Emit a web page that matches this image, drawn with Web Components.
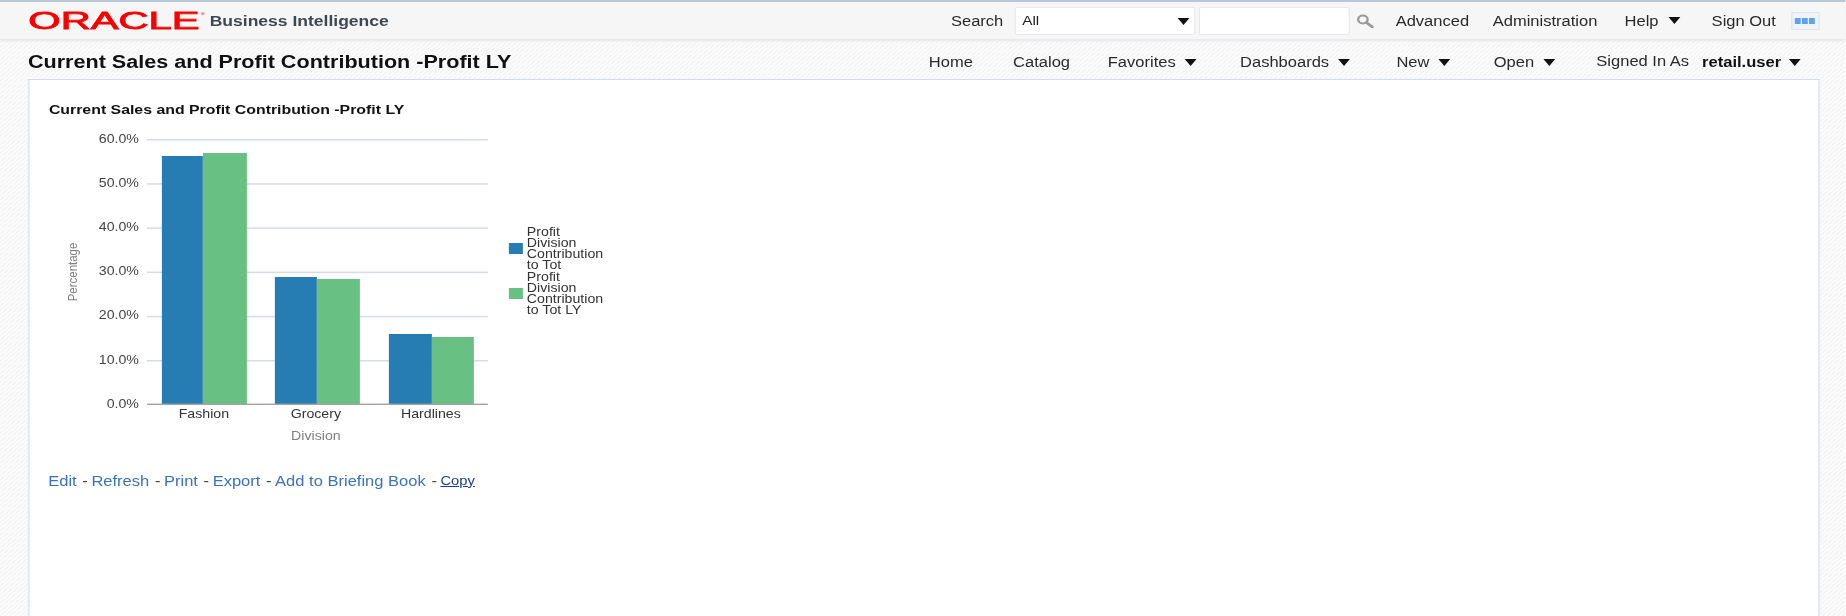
<!DOCTYPE html>
<html lang="en"><head><meta charset="utf-8"><title>Oracle Business Intelligence</title>
<style>
html,body{margin:0;padding:0;height:616px;overflow:hidden;background:#fff}
body{font-family:"Liberation Sans",Arial,sans-serif;font-size:14px;color:#2b2b2b}
</style></head><body>
<obi-app>
  <obi-global-header></obi-global-header>
  <obi-title-bar heading="Current Sales and Profit Contribution -Profit LY"></obi-title-bar>
  <obi-card>
    <span slot="title">Current Sales and Profit Contribution -Profit LY</span>
    <obi-chart></obi-chart>
    <obi-links></obi-links>
  </obi-card>
</obi-app>
<script>
const S=1.18;
function def(name,html,extra){
  customElements.define(name,class extends HTMLElement{
    constructor(){super();this.attachShadow({mode:'open'}).innerHTML=html;}
    connectedCallback(){extra&&extra.call(this);}
  });
}
def('obi-app',`<style>
:host{display:flex;flex-direction:column;width:1564.4px;height:616px;transform:scaleX(${S});transform-origin:0 0;overflow:hidden;filter:blur(.35px);
background:repeating-linear-gradient(135deg,#f3f3f3 0 1px,#fbfbfb 1px 3px)}
</style><slot></slot>`);
def('obi-arrow',`<style>:host{display:inline-block;width:0;height:0;border-left:5px solid transparent;border-right:5px solid transparent;border-top:7px solid #111;margin-left:8px;vertical-align:1px}</style>`);
def('obi-item',`<style>:host{display:inline-flex;align-items:center;white-space:nowrap;font-size:14px;line-height:16px;color:#2a2a2a}</style><slot></slot>`);
def('obi-logo',`<style>:host{display:block;width:150px;height:26px}svg{display:block;overflow:visible}</style>
<svg width="150" height="26" viewBox="0 0 150 26" role="img" aria-label="Oracle">
<text x="0" y="21" font-family="Liberation Sans,Arial,sans-serif" font-size="23" fill="#f80000" stroke="#f80000" stroke-width=".8" textLength="145" lengthAdjust="spacingAndGlyphs">ORACLE</text>
<circle cx="147.8" cy="5.6" r="1.6" fill="#f29a9a"/>
</svg>`);
def('obi-select',`<style>:host{display:flex;align-items:center;justify-content:space-between;box-sizing:border-box;width:152.5px;height:28px;background:#fff;border:1px solid #e6e9ef;border-radius:2px;padding:0 4px 0 5px;font-size:13px;color:#222}
i{display:block;border-left:5px solid transparent;border-right:5px solid transparent;border-top:7px solid #111;margin-top:2px}</style><span><slot></slot></span><i></i>`);
def('obi-input',`<style>:host{display:block;box-sizing:border-box;width:128px;height:28px;background:#fff;border:1px solid #e6e9ef;border-radius:2px}</style>`);
def('obi-search-icon',`<style>:host{display:block;width:16px;height:14px}svg{display:block}</style>
<svg width="16" height="14" viewBox="0 0 16 14"><circle cx="6" cy="5.5" r="4" fill="none" stroke="#9a9a9a" stroke-width="2"/><path d="M9 8.5l5 4.5" stroke="#9a9a9a" stroke-width="2.6" stroke-linecap="round"/></svg>`);
def('obi-apps-icon',`<style>:host{display:flex;align-items:center;justify-content:center;gap:1.6px;box-sizing:border-box;width:24px;height:18px;background:#f0f3f7;border:1px solid #dfe4ea}
b{display:block;width:4.6px;height:6px;background:#5ea3ee}</style><b></b><b></b><b></b>`);
def('obi-global-header',`<style>
:host{display:flex;align-items:center;box-sizing:border-box;height:40px;flex:none;padding:0 22.9px 0 23.7px;background:#f6f6f6;border-top:2px solid #b9c7da;border-bottom:1px solid #e9e9e9;box-shadow:0 1px 2px #e6e6e6;color:#333}
.bi{margin:1px 0 0 4px;font-weight:bold;font-size:14.85px;color:#3f4750}
.right{margin-left:auto;display:flex;align-items:center}
</style>
<obi-logo></obi-logo><span class="bi">Business Intelligence</span>
<div class="right">
<obi-item>Search</obi-item><obi-select style="margin-left:10px">All</obi-select><obi-input style="margin-left:3.5px"></obi-input>
<obi-search-icon style="margin-left:5px"></obi-search-icon>
<obi-item style="margin-left:17.5px">Advanced</obi-item>
<obi-item style="margin-left:20px">Administration</obi-item>
<obi-item style="margin-left:23px">Help<obi-arrow></obi-arrow></obi-item>
<obi-item style="margin-left:27px">Sign Out</obi-item>
<obi-apps-icon style="margin-left:12.5px"></obi-apps-icon>
</div>`);
def('obi-title-bar',`<style>
:host{display:flex;align-items:center;box-sizing:border-box;height:39px;flex:none;padding:5px 38px 0 23.7px}
h1{margin:0;font-size:18.3px;line-height:20px;font-weight:bold;color:#111}
.right{margin-left:auto;display:flex;align-items:center}
</style>
<h1></h1>
<div class="right">
<obi-item>Home</obi-item>
<obi-item style="margin-left:34px">Catalog</obi-item>
<obi-item style="margin-left:32px">Favorites<obi-arrow></obi-arrow></obi-item>
<obi-item style="margin-left:36.5px">Dashboards<obi-arrow></obi-arrow></obi-item>
<obi-item style="margin-left:39px">New<obi-arrow></obi-arrow></obi-item>
<obi-item style="margin-left:36.5px">Open<obi-arrow></obi-arrow></obi-item>
<obi-item style="margin-left:34.7px;position:relative;top:-1px">Signed In As</obi-item>
<obi-item style="margin-left:11px;font-weight:bold;color:#111">retail.user<obi-arrow style="margin-left:7px"></obi-arrow></obi-item>
</div>`,function(){this.shadowRoot.querySelector('h1').textContent=this.getAttribute('heading');});
def('obi-card',`<style>
:host{display:block;box-sizing:border-box;flex:1 1 auto;margin:0 22.9px 0 23.7px;padding:22px 0 0 16.75px;background:#fff;border:1.5px solid #d3dcea;border-bottom:0}
.t{font-size:13.45px;line-height:16px;font-weight:bold;color:#111}
</style><div class="t"><slot name="title"></slot></div><slot></slot>`);
function chartSvg(){
  const tx=(x,y,s,o={})=>`<text transform="translate(${x} ${y}) scale(${S} 1)${o.rot?' rotate(-90)':''}" font-size="${o.fs||12}" fill="${o.c||'#4a4a4a'}" text-anchor="${o.a||'middle'}">${s}</text>`;
  let g='';
  const ys=[139,183.2,227.4,271.6,315.8,360];
  ys.forEach(y=>g+=`<rect x="147" y="${y}" width="341" height="1.5" fill="#d6dbe5"/>`);
  const B='#267db3',G='#68c182';
  [[162,203,156,B],[203,247,153,G],[275,317,277,B],[317,360,279,G],[389,432,334,B],[432,474,337,G]].forEach(([a,b,t,c])=>g+=`<rect x="${a}" y="${t}" width="${b-a}" height="${404-t}" fill="${c}"/>`);
  g+=`<rect x="147" y="403.6" width="341" height="1.4" fill="#a3a3a3"/>`;
  ['60.0%','50.0%','40.0%','30.0%','20.0%','10.0%','0.0%'].forEach((s,i)=>g+=tx(139,142.5+i*44.2,s,{a:'end',c:'#444'}));
  g+=tx(204,418,'Fashion',{c:'#333'})+tx(316,418,'Grocery',{c:'#333'})+tx(431,418,'Hardlines',{c:'#333'});
  g+=tx(316,440,'Division',{c:'#808080'})+tx(77,272,'Percentage',{rot:1,fs:11.5,c:'#808080'});
  g+=`<rect x="509" y="243" width="14" height="11" fill="${B}"/><rect x="509" y="288" width="14" height="11" fill="${G}"/>`;
  ['Profit','Division','Contribution','to Tot','Profit','Division','Contribution','to Tot LY'].forEach((s,i)=>g+=tx(527,235.7+i*11.2,s,{a:'start',c:'#333'}));
  return `<svg width="${571/S}" height="330" viewBox="48.5 120 571 330" preserveAspectRatio="none" font-family="Liberation Sans,Arial,sans-serif">${g}</svg>`;
}
def('obi-chart',`<style>:host{display:block;margin-top:1.5px}svg{display:block}</style>`+chartSvg());
def('obi-links',`<style>
:host{display:flex;align-items:center;margin:23px 0 0 -.6px;font-size:14px;line-height:16px;white-space:nowrap}
a{color:#3b72b8;text-decoration:none}
i{font-style:normal;color:#444;margin:0 3px 0 4.8px}
a.c{color:#1d3f97;font-size:12.5px;text-decoration:underline}
</style><a>Edit</a><i>-</i><a>Refresh</a><i>-</i><a>Print</a><i>-</i><a>Export</a><i>-</i><a>Add to Briefing Book</a><i>-</i><a class="c">Copy</a>`);
</script>
</body></html>
